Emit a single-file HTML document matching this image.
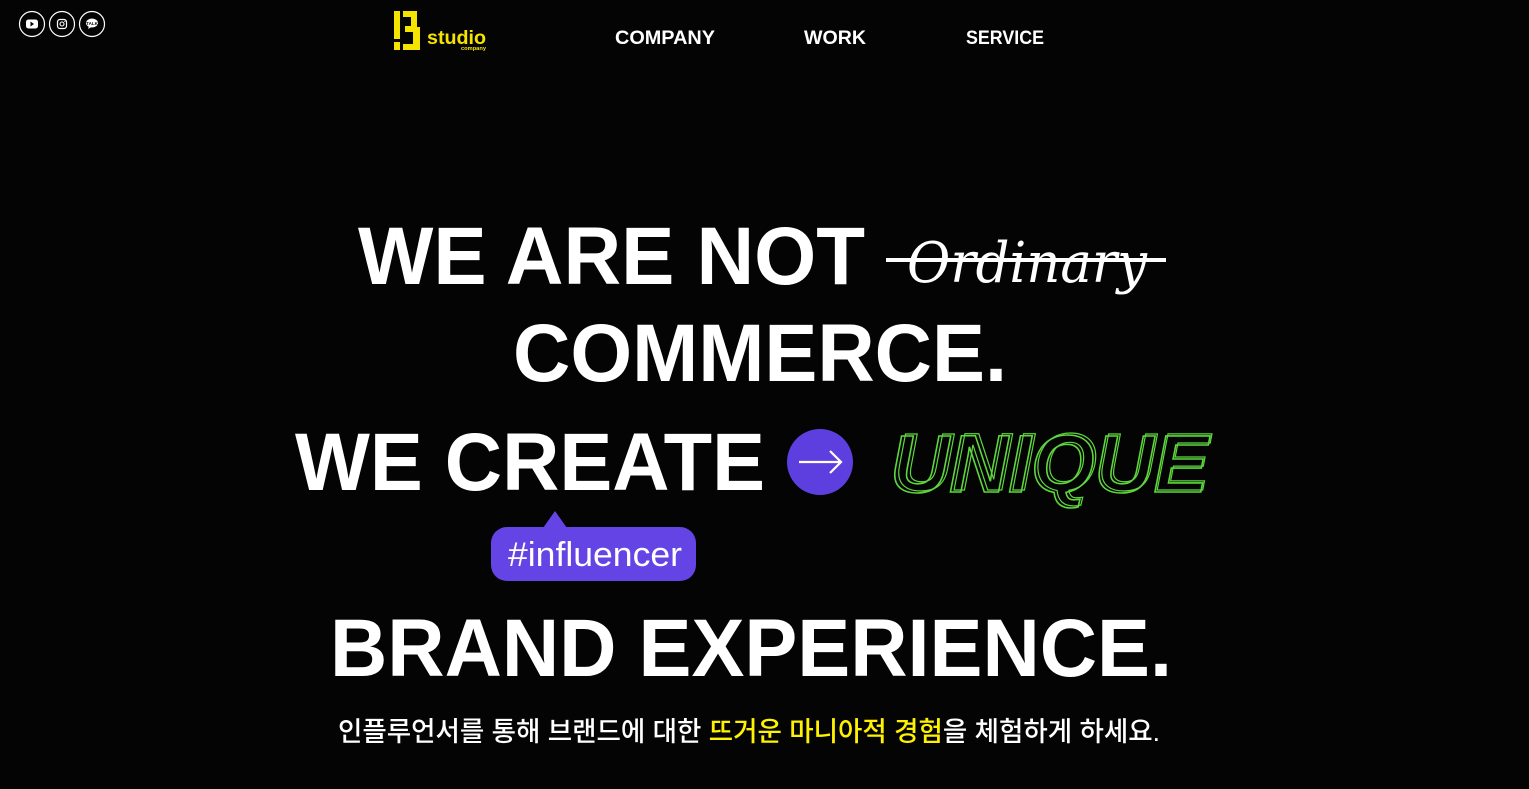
<!DOCTYPE html>
<html><head><meta charset="utf-8"><style>
html,body{margin:0;padding:0;background:#040404;width:1529px;height:789px;overflow:hidden}
svg{display:block}
</style></head><body>
<svg width="1529" height="789" viewBox="0 0 1529 789" xmlns="http://www.w3.org/2000/svg">
<rect width="1529" height="789" fill="#040404"/>
<g fill="none" stroke="#fff" stroke-width="1.2">
<circle cx="32" cy="24" r="12.5"/><circle cx="62" cy="24" r="12.5"/><circle cx="92" cy="24" r="12.5"/>
</g>
<rect x="26" y="19.5" width="12" height="9" rx="2.5" fill="#fff"/>
<path d="M30.5 21.5 L34 24 L30.5 26.5Z" fill="#040404"/>
<rect x="57.5" y="19.5" width="9" height="9" rx="2.5" fill="none" stroke="#fff" stroke-width="1.2"/>
<circle cx="62" cy="24" r="2" fill="none" stroke="#fff" stroke-width="1.1"/>
<circle cx="64.8" cy="21.3" r="0.6" fill="#fff"/>
<ellipse cx="92" cy="23" rx="6" ry="4.5" fill="#fff"/>
<path d="M89 26 L88 29 L91.5 27Z" fill="#fff"/>
<text x="92" y="24.8" font-family="Liberation Sans" font-size="4.5" font-weight="700" text-anchor="middle" fill="#040404">TALK</text>
<g fill="#f5e400">
<rect x="394" y="11" width="6" height="28"/><rect x="394" y="42" width="6" height="8"/>
<path d="M403 11 H417 V27 H420 V50 H403 V44 H413 V32 H405 V26 H411 V17 H403Z"/>
</g>
<text x="427" y="44" font-family="Liberation Sans" font-weight="700" font-size="19" fill="#f5e400" textLength="59" lengthAdjust="spacingAndGlyphs">studio</text>
<text x="461" y="50" font-family="Liberation Sans" font-weight="700" font-size="5" fill="#f5e400" textLength="25" lengthAdjust="spacingAndGlyphs">company</text>
<g font-family="Liberation Sans" font-weight="700" font-size="19" fill="#fff">
<text x="615" y="44" textLength="100" lengthAdjust="spacingAndGlyphs">COMPANY</text>
<text x="804" y="44" textLength="62" lengthAdjust="spacingAndGlyphs">WORK</text>
<text x="966" y="44" textLength="78" lengthAdjust="spacingAndGlyphs">SERVICE</text>
</g>
<g font-family="Liberation Sans" font-weight="700" font-size="82" fill="#fff">
<text x="358" y="284" textLength="507" lengthAdjust="spacingAndGlyphs">WE ARE NOT</text>
<text x="513" y="381" textLength="494" lengthAdjust="spacingAndGlyphs">COMMERCE.</text>
<text x="295" y="490" textLength="470" lengthAdjust="spacingAndGlyphs">WE CREATE</text>
<text x="330" y="676" textLength="842" lengthAdjust="spacingAndGlyphs">BRAND EXPERIENCE.</text>
</g>
<text x="907" y="282" font-family="DejaVu Serif" font-style="italic" font-size="56" fill="#fff" textLength="240" lengthAdjust="spacingAndGlyphs">Ordinary</text>
<rect x="886" y="258" width="280" height="4" fill="#fff"/>
<circle cx="820" cy="462" r="33" fill="#5d3fe0"/>
<path d="M799 462 H841 M830 451 L841 462 L830 473" fill="none" stroke="#fff" stroke-width="2.2"/>
<g font-family="Liberation Sans" font-weight="700" font-style="italic" font-size="82" fill="none" stroke="#5ed63e" stroke-width="1.6">
<text x="890" y="492" textLength="318" lengthAdjust="spacingAndGlyphs">UNIQUE</text>
<text x="894" y="490" textLength="316" lengthAdjust="spacingAndGlyphs" stroke-width="1.2">UNIQUE</text>
</g>
<path d="M543 528 L555 511 L567 528Z" fill="#6444e4"/>
<rect x="491" y="527" width="205" height="54" rx="16" fill="#6444e4"/>
<text x="508" y="566" font-family="Liberation Sans" font-size="34" fill="#fff" textLength="174" lengthAdjust="spacingAndGlyphs">#influencer</text>
<text x="338" y="741" font-family="Liberation Sans, 'Noto Sans CJK KR', sans-serif" font-size="27" font-weight="500" fill="#fff" textLength="822" lengthAdjust="spacingAndGlyphs">인플루언서를 통해 브랜드에 대한 <tspan fill="#fff200">뜨거운 마니아적 경험</tspan>을 체험하게 하세요.</text>
</svg>
</body></html>
